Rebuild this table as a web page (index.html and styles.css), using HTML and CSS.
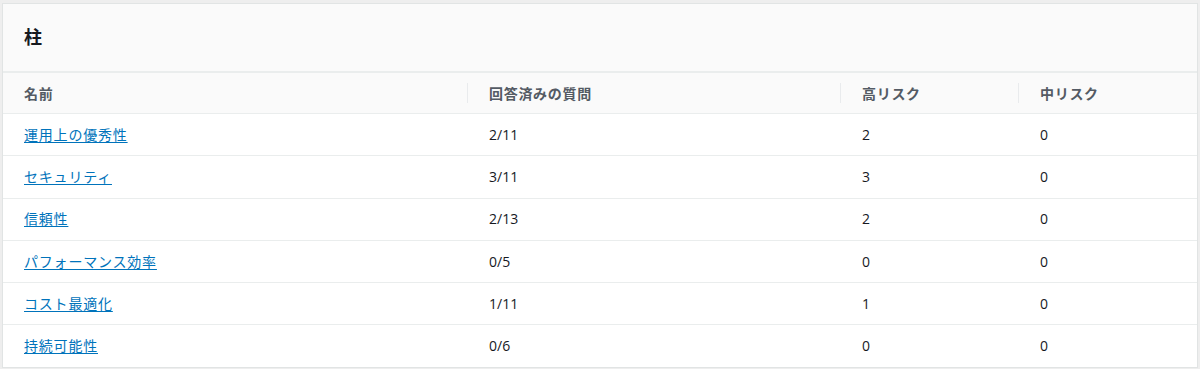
FILE: index.html
```html
<!DOCTYPE html>
<html lang="ja">
<head>
<meta charset="utf-8">
<link rel="stylesheet" href="styles.css">
</head>
<body>
<div class="card">
  <div class="card-header"><h2 class="title">柱</h2></div>
  <table class="tbl">
    <colgroup>
      <col class="c1"><col class="c2"><col class="c3"><col class="c4">
    </colgroup>
    <thead>
      <tr>
        <th class="first">名前</th>
        <th>回答済みの質問</th>
        <th>高リスク</th>
        <th>中リスク</th>
      </tr>
    </thead>
    <tbody>
      <tr><td class="first"><a href="#">運用上の優秀性</a></td><td>2/11</td><td>2</td><td>0</td></tr>
      <tr><td class="first"><a href="#">セキュリティ</a></td><td>3/11</td><td>3</td><td>0</td></tr>
      <tr><td class="first"><a href="#">信頼性</a></td><td>2/13</td><td>2</td><td>0</td></tr>
      <tr><td class="first"><a href="#">パフォーマンス効率</a></td><td>0/5</td><td>0</td><td>0</td></tr>
      <tr><td class="first"><a href="#">コスト最適化</a></td><td>1/11</td><td>1</td><td>0</td></tr>
      <tr class="last"><td class="first"><a href="#">持続可能性</a></td><td>0/6</td><td>0</td><td>0</td></tr>
    </tbody>
  </table>
</div>
</body>
</html>
```

FILE: styles.css
```css
html, body {
  margin: 0;
  padding: 0;
  background: #eeeeee;
}
body {
  font-family: "Open Sans", "Noto Sans CJK JP", sans-serif;
  font-size: 14px;
  color: #16191f;
  padding: 4px 3px 2px 3px;
}
.card {
  width: 1194px;
  background: #ffffff;
  box-shadow: 0 0 0 1px #e1e4e4;
}
.card-header {
  background: #fafafa;
  height: 68px;
  box-sizing: border-box;
  padding: 0 21px;
  display: flex;
  align-items: center;
  border-bottom: 1px solid #eaeded;
}
.title {
  margin: 0;
  font-size: 18px;
  font-weight: 700;
  color: #16191f;
  line-height: 22px;
  padding-bottom: 2px;
  letter-spacing: 1px;
}
.tbl {
  width: 100%;
  border-collapse: collapse;
  table-layout: fixed;
}
.c1 { width: 464px; }
.c2 { width: 373px; }
.c3 { width: 178px; }
.c4 { width: 179px; }
th {
  background: #fafafa;
  color: #545b64;
  font-weight: 700;
  text-align: left;
  height: 41px;
  padding: 0 0 0 22px;
  border-top: 1px solid #eaeded;
  border-bottom: 1px solid #eaeded;
  position: relative;
  box-sizing: border-box;
  white-space: nowrap;
  letter-spacing: 0.7px;
}
th::before {
  content: "";
  position: absolute;
  left: 0;
  top: 10px;
  bottom: 10px;
  width: 1px;
  background: #e9ebed;
}
th.first::before { display: none; }
th.first, td.first { padding-left: 21px; }
td {
  height: 42.3px;
  padding: 0 0 0 22px;
  border-bottom: 1px solid #eaeded;
  box-sizing: border-box;
  white-space: nowrap;
  line-height: 20px;
}
tr.last td { border-bottom: none; height: 42px; }
a {
  color: #0073bb;
  text-decoration: underline;
  text-underline-offset: 2px;
  letter-spacing: 0.8px;
}
```
